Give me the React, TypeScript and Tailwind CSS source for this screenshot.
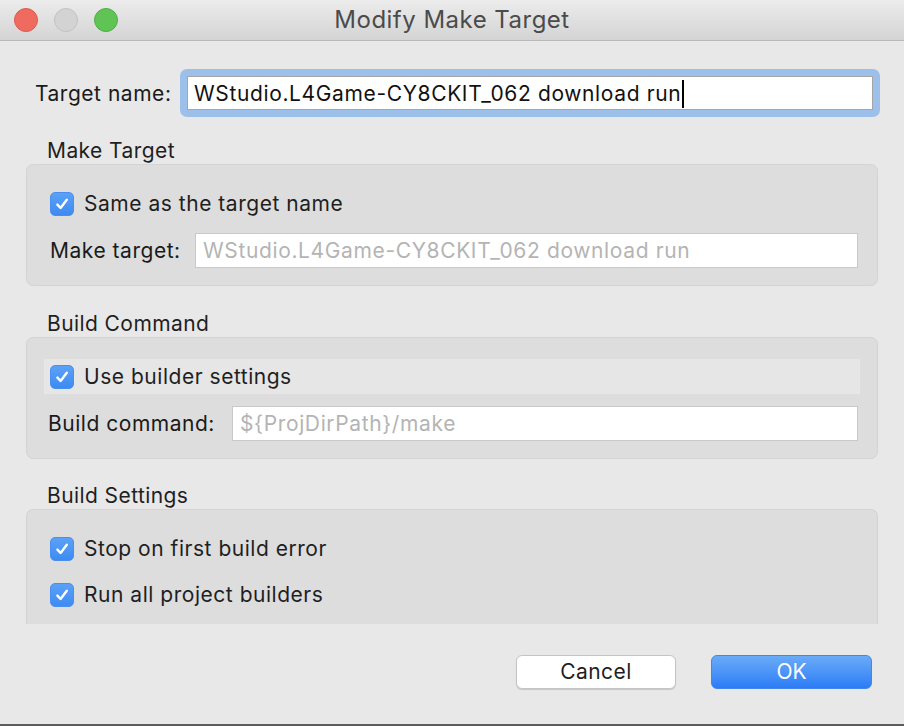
import React from "react";

const font = { fontFamily: "Inter, 'Open Sans', sans-serif" };

function Check() {
  return (
    <span className="flex h-[24px] w-[24px] shrink-0 items-center justify-center rounded-[5px] border border-[#4a8ef0] bg-gradient-to-b from-[#5aa1f7] to-[#3d8bf2]">
      <svg width="16" height="16" viewBox="0 0 16 16" fill="none">
        <path d="M3.4 8.6 L6.6 12 L12.8 3.8" stroke="white" strokeWidth="2.4" strokeLinecap="round" strokeLinejoin="round" />
      </svg>
    </span>
  );
}

function CheckRow({ label }: { label: string }) {
  return (
    <div className="flex items-center gap-[10px]">
      <Check />
      <span className="text-[21px] leading-[24px] tracking-[0.025em] text-[#1f1f1f]">{label}</span>
    </div>
  );
}

function Field({ value }: { value: string }) {
  return (
    <div className="flex h-[35px] flex-1 items-center border border-[#c9c9c9] bg-white px-[7px] text-[21px] tracking-[0.03em] text-[#b4b4b4]">
      {value}
    </div>
  );
}

function Heading({ children }: { children: React.ReactNode }) {
  return (
    <div className="h-[25px] pl-[21px] pt-[1px] text-[21px] leading-[24px] tracking-[0.02em] text-[#1f1f1f]">{children}</div>
  );
}

export default function App() {
  return (
    <div style={font} className="relative flex h-[726px] w-[904px] flex-col overflow-hidden border-b-2 border-[#5c5c5c] bg-[#e8e8e8]">
      {/* title bar */}
      <div className="relative flex h-[41px] shrink-0 items-center border-b border-[#b9b9b9] bg-gradient-to-b from-[#ececec] to-[#d4d4d4] px-[14px]">
        <div className="flex gap-[16px]">
          <span className="h-[24px] w-[24px] rounded-full border border-[#dc5a50] bg-[#ef6b60]" />
          <span className="h-[24px] w-[24px] rounded-full border border-[#c2c2c2] bg-[#d3d3d3]" />
          <span className="h-[24px] w-[24px] rounded-full border border-[#4fae45] bg-[#60c455]" />
        </div>
        <div className="absolute inset-0 flex items-center justify-center text-[24px] tracking-[0.02em] text-[#4b4b4b]">
          Modify Make Target
        </div>
      </div>

      {/* target name */}
      <div className="mt-[28px] flex items-center pl-[35px] pr-[24px]">
        <span className="w-[145px] pt-[2px] text-[21px] tracking-[0.025em] text-[#1a1a1a]">Target name:</span>
        <div className="flex-1 rounded-[7px] bg-[#9cc0ea] p-[7px]">
          <div className="flex h-[34px] items-center border border-[#a6a6a6] bg-white px-[6px] pt-[2px] text-[21px] tracking-[0.03em] text-[#111]">
            WStudio.L4Game-CY8CKIT_062 download run
            <span className="ml-[1px] h-[28px] w-[2px] bg-black" />
          </div>
        </div>
      </div>

      <div className="flex flex-col px-[26px]">
        {/* make target */}
        <div className="mt-[21px]">
          <Heading>Make Target</Heading>
          <div className="mt-[1px] flex flex-col gap-[17px] rounded-[7px] border border-[#d4d4d4] bg-[#dddddd] pb-[17px] pl-[23px] pr-[19px] pt-[27px]">
            <CheckRow label="Same as the target name" />
            <div className="flex items-center">
              <span className="w-[145px] text-[21px] tracking-[0.025em] text-[#1a1a1a]">Make target:</span>
              <Field value="WStudio.L4Game-CY8CKIT_062 download run" />
            </div>
          </div>
        </div>

        {/* build command */}
        <div className="mt-[25px]">
          <Heading>Build Command</Heading>
          <div className="mt-[1px] flex flex-col gap-[12px] rounded-[7px] border border-[#d4d4d4] bg-[#dddddd] pb-[17px] pl-[17px] pr-[17px] pt-[21px]">
            <div className="flex h-[35px] items-center bg-[#e6e6e6] pl-[6px]">
              <CheckRow label="Use builder settings" />
            </div>
            <div className="flex items-center pl-[4px] pr-[2px]">
              <span className="w-[184px] text-[21px] tracking-[0.025em] text-[#1a1a1a]">Build command:</span>
              <Field value="${ProjDirPath}/make" />
            </div>
          </div>
        </div>

        {/* build settings */}
        <div className="mt-[24px]">
          <Heading>Build Settings</Heading>
          <div className="mt-[1px] flex h-[115px] flex-col gap-[22px] rounded-t-[7px] border border-b-0 border-[#d4d4d4] bg-[#dddddd] pl-[23px] pt-[27px]">
            <CheckRow label="Stop on first build error" />
            <CheckRow label="Run all project builders" />
          </div>
        </div>
      </div>

      {/* buttons */}
      <div className="mt-[31px] flex justify-end gap-[35px] pr-[32px]">
        <button className="h-[34px] w-[160px] rounded-[6px] border border-[#c4c4c4] bg-white text-[21px] tracking-[0.02em] text-[#1f1f1f] shadow-[0_1px_1px_rgba(0,0,0,0.15)]">
          Cancel
        </button>
        <button className="h-[34px] w-[161px] rounded-[6px] border border-[#3f86ee] bg-gradient-to-b from-[#6aabf8] to-[#2b7cf5] text-[21px] text-white">
          OK
        </button>
      </div>
    </div>
  );
}
